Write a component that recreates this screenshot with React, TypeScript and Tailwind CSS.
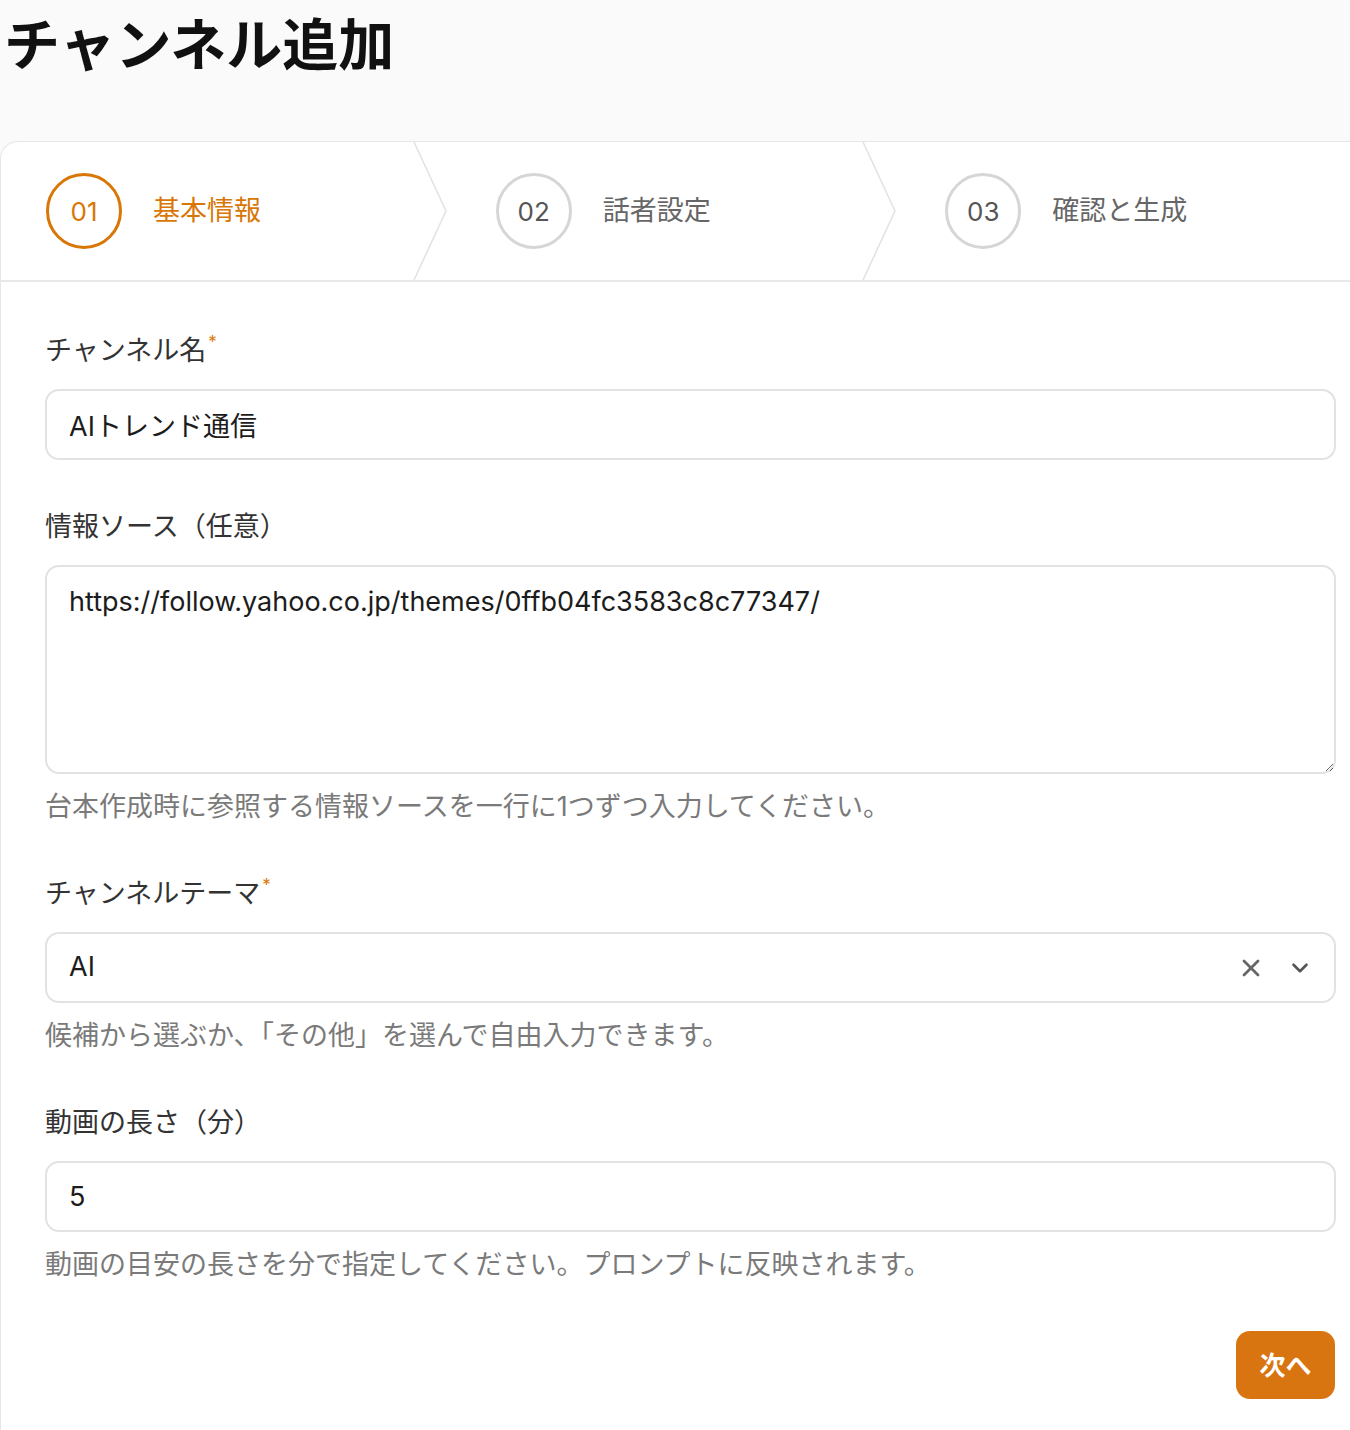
import { X, ChevronDown } from "lucide-react";

const steps = [
  { no: "01", label: "基本情報", active: true },
  { no: "02", label: "話者設定", active: false },
  { no: "03", label: "確認と生成", active: false },
];

function Chevron() {
  return (
    <svg
      className="absolute right-[4px] top-0 h-full w-[34px]"
      viewBox="0 0 34 140"
      preserveAspectRatio="none"
      fill="none"
    >
      <path d="M1 0 L33 70 L1 140" stroke="#e2e2e2" strokeWidth="1.5" />
    </svg>
  );
}

function Label({ text, required }: { text: string; required?: boolean }) {
  return (
    <div className="mb-[20px] h-[36px] overflow-visible text-[27px] leading-[36px] text-[#333]">
      {text}
      {required && (
        <span className="relative top-[-12px] ml-[2px] text-[17px] text-[#d97706]">*</span>
      )}
    </div>
  );
}

function Help({ text }: { text: string }) {
  return (
    <p className="mt-[15px] h-[36px] text-[27px] leading-[36px] text-[#7a7a7a]">{text}</p>
  );
}

const boxCls =
  "w-full rounded-[14px] border-2 border-[#e2e2e2] bg-white px-[22px] text-[27px] text-[#1c1c1c] outline-none";

export default function App() {
  return (
    <div
      className="min-h-[1430px] bg-[#fafafa]"
      style={{ fontFamily: "Inter, 'Noto Sans CJK JP', sans-serif" }}
    >
      <div className="h-[141px] pl-[4px] pt-[10px]">
        <h1 className="text-[56px] font-bold leading-[70px] text-[#111]">チャンネル追加</h1>
      </div>

      <div className="min-h-[1289px] rounded-tl-[18px] border-l border-t border-[#e6e6e6] bg-white">
        <div className="flex h-[140px] border-b-2 border-[#e8e8e8]">
          {steps.map((s, i) => (
            <div key={s.no} className="relative flex w-[452px] items-center pl-[45px]">
              <div
                className={`flex h-[76px] w-[76px] items-center justify-center rounded-full border-[3px] text-[26px] ${
                  s.active ? "border-[#d97706] text-[#d97706]" : "border-[#d6d6d6] text-[#555]"
                }`}
              >
                {s.no}
              </div>
              <span
                className={`ml-[31px] text-[27px] ${s.active ? "text-[#d97706]" : "text-[#666]"}`}
              >
                {s.label}
              </span>
              {i < steps.length - 1 && <Chevron />}
            </div>
          ))}
        </div>

        <div className="pl-[44px] pr-[14px] pt-[51px]">
          <div>
            <Label text="チャンネル名" required />
            <input className={`${boxCls} h-[71px]`} defaultValue="AIトレンド通信" />
          </div>

          <div className="mt-[49px]">
            <Label text="情報ソース（任意）" />
            <textarea
              className={`${boxCls} block h-[209px] py-[17px] leading-[36px]`}
              defaultValue="https://follow.yahoo.co.jp/themes/0ffb04fc3583c8c77347/"
            />
            <Help text="台本作成時に参照する情報ソースを一行に1つずつ入力してください。" />
          </div>

          <div className="mt-[51px]">
            <Label text="チャンネルテーマ" required />
            <div className={`${boxCls} flex h-[71px] items-center`}>
              <span className="flex-1">AI</span>
              <X className="mr-[22px] h-[28px] w-[28px] text-[#666]" strokeWidth={2.4} />
              <ChevronDown className="mr-[-1px] h-[26px] w-[26px] text-[#555]" strokeWidth={2.4} />
            </div>
            <Help text="候補から選ぶか、「その他」を選んで自由入力できます。" />
          </div>

          <div className="mt-[51px]">
            <Label text="動画の長さ（分）" />
            <input className={`${boxCls} h-[71px]`} defaultValue="5" />
            <Help text="動画の目安の長さを分で指定してください。プロンプトに反映されます。" />
          </div>

          <div className="mt-[48px] flex justify-end">
            <button className="mr-[1px] h-[68px] w-[99px] rounded-[14px] bg-[#d97510] text-[26px] font-bold text-white">
              次へ
            </button>
          </div>
        </div>
      </div>
    </div>
  );
}
